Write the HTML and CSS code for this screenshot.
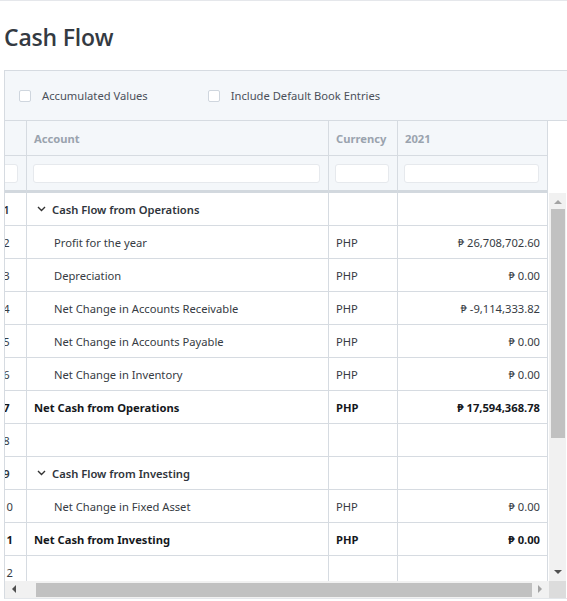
FILE: index.html
```html
<!DOCTYPE html>
<html lang="en">
<head>
    <meta charset="UTF-8">
    <meta name="viewport" content="width=device-width, initial-scale=1.0">
    <title>Cash Flow</title>
    <link rel="stylesheet" href="styles.css">
</head>
<body>
    <div class="page">
        <h1 class="title">Cash Flow</h1>

        <div class="panel">
            <div class="options">
                <label class="option"><span class="check"></span>Accumulated Values</label>
                <label class="option"><span class="check"></span>Include Default Book Entries</label>
            </div>

            <div class="grid-head">
                <div class="grid-inner">
                    <div class="row head-row">
                        <div class="cell num"></div>
                        <div class="cell">Account</div>
                        <div class="cell">Currency</div>
                        <div class="cell">2021</div>
                    </div>
                    <div class="row filter-row">
                        <div class="cell num"><span class="filter"></span></div>
                        <div class="cell"><span class="filter"></span></div>
                        <div class="cell"><span class="filter"></span></div>
                        <div class="cell"><span class="filter"></span></div>
                    </div>
                </div>
            </div>

            <div class="grid-body">
                <div class="viewport">
                    <div class="grid-inner">
                        <div class="row group">
                            <div class="cell num">1</div>
                            <div class="cell"><svg class="chev" width="9" height="6" viewBox="0 0 9 6"><polyline points="1,1 4.5,4.5 8,1" fill="none" stroke="#333" stroke-width="1.4"/></svg>Cash Flow from Operations</div>
                            <div class="cell"></div>
                            <div class="cell"></div>
                        </div>
                        <div class="row">
                            <div class="cell num">2</div>
                            <div class="cell child">Profit for the year</div>
                            <div class="cell">PHP</div>
                            <div class="cell amount">₱ 26,708,702.60</div>
                        </div>
                        <div class="row">
                            <div class="cell num">3</div>
                            <div class="cell child">Depreciation</div>
                            <div class="cell">PHP</div>
                            <div class="cell amount">₱ 0.00</div>
                        </div>
                        <div class="row">
                            <div class="cell num">4</div>
                            <div class="cell child">Net Change in Accounts Receivable</div>
                            <div class="cell">PHP</div>
                            <div class="cell amount">₱ -9,114,333.82</div>
                        </div>
                        <div class="row">
                            <div class="cell num">5</div>
                            <div class="cell child">Net Change in Accounts Payable</div>
                            <div class="cell">PHP</div>
                            <div class="cell amount">₱ 0.00</div>
                        </div>
                        <div class="row">
                            <div class="cell num">6</div>
                            <div class="cell child">Net Change in Inventory</div>
                            <div class="cell">PHP</div>
                            <div class="cell amount">₱ 0.00</div>
                        </div>
                        <div class="row total">
                            <div class="cell num">7</div>
                            <div class="cell">Net Cash from Operations</div>
                            <div class="cell">PHP</div>
                            <div class="cell amount">₱ 17,594,368.78</div>
                        </div>
                        <div class="row">
                            <div class="cell num">8</div>
                            <div class="cell"></div>
                            <div class="cell"></div>
                            <div class="cell"></div>
                        </div>
                        <div class="row group">
                            <div class="cell num">9</div>
                            <div class="cell"><svg class="chev" width="9" height="6" viewBox="0 0 9 6"><polyline points="1,1 4.5,4.5 8,1" fill="none" stroke="#333" stroke-width="1.4"/></svg>Cash Flow from Investing</div>
                            <div class="cell"></div>
                            <div class="cell"></div>
                        </div>
                        <div class="row">
                            <div class="cell num">10</div>
                            <div class="cell child">Net Change in Fixed Asset</div>
                            <div class="cell">PHP</div>
                            <div class="cell amount">₱ 0.00</div>
                        </div>
                        <div class="row total">
                            <div class="cell num">11</div>
                            <div class="cell">Net Cash from Investing</div>
                            <div class="cell">PHP</div>
                            <div class="cell amount">₱ 0.00</div>
                        </div>
                        <div class="row">
                            <div class="cell num">12</div>
                            <div class="cell"></div>
                            <div class="cell"></div>
                            <div class="cell"></div>
                        </div>
                    </div>
                </div>
                <div class="vscroll">
                    <span class="arrow up"></span>
                    <div class="vthumb"></div>
                    <span class="arrow down"></span>
                </div>
            </div>

            <div class="hscroll-row">
                <div class="hscroll">
                    <span class="arrow left"></span>
                    <div class="hthumb"></div>
                    <span class="arrow right"></span>
                </div>
                <div class="corner"></div>
            </div>
        </div>
    </div>
</body>
</html>
```

FILE: styles.css
```css
body {
    margin: 0;
    font-family: "Noto Sans", "Open Sans", sans-serif;
    font-size: 11.2px;
    color: #363b43;
    background: #fff;
}
.page {
    border-top: 1px solid #e5e7eb;
    width: 567px;
    height: 600px;
    overflow: hidden;
}
.title {
    margin: 0;
    padding: 20px 0 0 4px;
    height: 50px;
    box-sizing: border-box;
    font-family: "Open Sans", "Noto Sans", sans-serif;
    font-size: 23px;
    line-height: 32px;
    font-weight: 600;
    color: #343a42;
    letter-spacing: -0.2px;
}
.panel {
    margin: 19px 0 0 4px;
    border-top: 1px solid #d6dbe1;
    border-left: 1px solid #d6dbe1;
    border-bottom: 1px solid #e3e6ea;
}

/* option checkboxes */
.options {
    display: flex;
    align-items: center;
    height: 49px;
    padding-left: 14px;
    background: #f4f7fa;
    border-bottom: 1px solid #d6dbe1;
    color: #4b5059;
}
.option {
    display: flex;
    align-items: center;
    margin-right: 60px;
}
.check {
    width: 10px;
    height: 10px;
    border: 1px solid #cfd6de;
    border-radius: 2px;
    background: #fff;
    margin-right: 11px;
}

/* grid */
.grid-head {
    width: 544px;
    overflow: hidden;
    background: #fff;
}
.grid-inner {
    margin-left: -15px;
    width: 558px;
}
.row {
    display: grid;
    grid-template-columns: 37px 302px 69px 150px;
    height: 33px;
}
.cell {
    display: flex;
    align-items: center;
    padding: 0 7px;
    border-right: 1px solid #d6dbe1;
    border-bottom: 1px solid #d6dbe1;
    white-space: nowrap;
    overflow: hidden;
}
.cell.num {
    justify-content: center;
    padding: 0 3px 0 0;
}
.head-row {
    height: 35px;
}
.head-row .cell {
    background: #f4f7fa;
    font-weight: 700;
    color: #9aa3ae;
}
.filter-row {
    height: 37px;
}
.filter-row .cell {
    background: #f4f7fa;
    border-bottom: 3px solid #d2d8de;
    padding: 0 8px 0 6px;
}
.filter-row .cell.num {
    padding-left: 8px;
}
.filter {
    flex: 1;
    height: 17px;
    background: #fff;
    border: 1px solid #e6e9ed;
    border-radius: 3px;
}
.grid-body {
    display: flex;
    height: 388px;
}
.viewport {
    width: 544px;
    overflow: hidden;
}
.group .cell {
    font-weight: 600;
    color: #2f343b;
}
.chev {
    margin: 0 6px 0 3px;
}
.child {
    padding-left: 27px;
}
.total .cell {
    font-weight: 700;
    color: #15181c;
}
.amount {
    justify-content: flex-end;
}

/* scrollbars */
.vscroll {
    width: 17px;
    background: #f1f1f1;
    position: relative;
}
.vthumb {
    position: absolute;
    left: 2px;
    right: 1px;
    top: 16px;
    height: 229px;
    background: #c1c1c1;
}
.hscroll-row {
    display: flex;
    height: 17px;
}
.hscroll {
    width: 544px;
    background: #f1f1f1;
    position: relative;
}
.hthumb {
    position: absolute;
    top: 2px;
    bottom: 1px;
    left: 31px;
    width: 496px;
    background: #c1c1c1;
}
.corner {
    width: 17px;
    background: #dcdcdc;
}
.arrow {
    position: absolute;
    width: 0;
    height: 0;
    border: 4px solid transparent;
}
.arrow.up {
    top: 3px;
    left: 5px;
    border-bottom-color: #a3a3a3;
}
.arrow.down {
    bottom: 3px;
    left: 5px;
    border-top-color: #505050;
}
.arrow.left {
    left: 3px;
    top: 4px;
    border-right-color: #505050;
}
.arrow.right {
    right: 3px;
    top: 4px;
    border-left-color: #a3a3a3;
}
```
